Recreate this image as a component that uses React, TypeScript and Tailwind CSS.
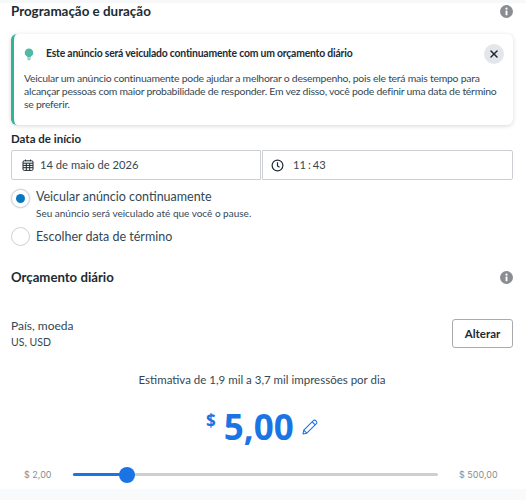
import React from 'react';
import { X } from 'lucide-react';

const InfoDot = () => (
  <svg viewBox="0 0 14 14" className="w-[13px] h-[13px]">
    <circle cx="7" cy="7" r="7" fill="#8a8d91" />
    <circle cx="7" cy="4" r="1.2" fill="#fff" />
    <rect x="6" y="6" width="2" height="5" rx="0.6" fill="#fff" />
  </svg>
);

const CalendarIcon = () => (
  <svg viewBox="0 0 12 12" className="w-[12px] h-[12px] text-[#1c2b33]" fill="none" stroke="currentColor" strokeWidth="1">
    <rect x="1" y="1.8" width="10" height="9.6" rx="1.2" />
    <path d="M1 4.2h10M1 6.4h10M1 8.7h10M4.3 4.2v7.2M7.7 4.2v7.2M3.5 0.6v1.6M8.5 0.6v1.6" />
  </svg>
);

const ClockIcon = () => (
  <svg viewBox="0 0 14 14" className="w-[13px] h-[13px] text-[#1c2b33]" fill="none" stroke="currentColor" strokeWidth="1.3">
    <circle cx="7" cy="7" r="5.8" />
    <path d="M7 3.6V7.4l2.2 1.6" />
  </svg>
);

const BulbIcon = () => (
  <svg viewBox="0 0 10 14" className="w-[10px] h-[13px]">
    <path d="M5 0.5a4.5 4.5 0 0 0-2.6 8.2c.5.4.7.9.7 1.4h3.8c0-.5.2-1 .7-1.4A4.5 4.5 0 0 0 5 0.5z" fill="#4fb9a5" />
    <rect x="3.2" y="10.8" width="3.6" height="2.4" rx="0.8" fill="#8fd3c6" />
  </svg>
);

const PencilIcon = () => (
  <svg viewBox="0 0 16 16" className="w-[16px] h-[16px] text-[#1b74e4]" fill="none" stroke="currentColor" strokeWidth="1.1">
    <path d="M1 15l.8-3.8L11.4 1.6a1.6 1.6 0 0 1 2.3 0l.7.7a1.6 1.6 0 0 1 0 2.3L4.8 14.2 1 15z" strokeLinejoin="round" />
    <path d="M1.8 11.2l3 3M10.2 2.8l3 3" />
  </svg>
);

export default function App() {
  return (
    <div className="font-['Lato',sans-serif] relative w-[526px] h-[500px] overflow-hidden bg-white text-[#1c2b33]">
      <div className="h-[3px] bg-[#f7f8f9]" />
      <div className="px-[11px] pr-[13px]">
        <div className="flex items-center justify-between h-[16px]">
          <h2 className="text-[13.4px] font-bold leading-[16px]">Programação e duração</h2>
          <InfoDot />
        </div>

        <div className="mt-[15px] h-[91px] rounded-[6px] border-l-[3px] border-[#2fb39a] bg-white shadow-[0_1px_4px_rgba(0,0,0,0.16)] pl-[10px] pr-[9px]">
          <div className="flex items-center h-[38px] pt-[2px]">
            <BulbIcon />
            <span className="ml-[12px] text-[10.4px] tracking-[-0.2px] font-bold">Este anúncio será veiculado continuamente com um orçamento diário</span>
            <span className="ml-auto w-[20px] h-[20px] rounded-full bg-[#e4e6eb] flex items-center justify-center">
              <X size={12} strokeWidth={3} />
            </span>
          </div>
          <p className="text-[10.4px] tracking-[-0.23px] leading-[13px] text-[#344854]">
            Veicular um anúncio continuamente pode ajudar a melhorar o desempenho, pois ele terá mais tempo para alcançar pessoas com maior probabilidade de responder. Em vez disso, você pode definir uma data de término se preferir.
          </p>
        </div>

        <div className="mt-[7px] text-[11.5px] font-bold leading-[14px]">Data de início</div>
        <div className="mt-[4px] flex gap-[1px] h-[30px]">
          <div className="w-[250px] border border-[#ccd0d5] rounded-l-[2px] flex items-center pl-[10px] gap-[6px] text-[11.2px] text-[#344854]">
            <CalendarIcon />
            <span>14 de maio de 2026</span>
          </div>
          <div className="flex-1 border border-[#ccd0d5] rounded-r-[2px] flex items-center pl-[8px] gap-[9px] text-[11.2px] text-[#344854]">
            <ClockIcon />
            <span>11<span className="mx-[2px]">:</span>43</span>
          </div>
        </div>

        <div className="mt-[8px] flex items-start gap-[6px]">
          <span className="w-[19px] h-[19px] mt-[1px] rounded-full border border-[#ccd0d5] flex items-center justify-center shadow-[0_0_2px_rgba(0,0,0,0.2)]">
            <span className="w-[9px] h-[9px] rounded-full bg-[#0a78be]" />
          </span>
          <div className="pt-[1px]">
            <div className="text-[12.5px] leading-[16px] text-[#344854]">Veicular anúncio continuamente</div>
            <div className="text-[10px] leading-[13px] mt-[2px] text-[#344854]">Seu anúncio será veiculado até que você o pause.</div>
          </div>
        </div>
        <div className="mt-[7px] flex items-center gap-[6px]">
          <span className="w-[19px] h-[19px] rounded-full border border-[#ccd0d5]" />
          <span className="text-[12.5px] leading-[16px] text-[#344854]">Escolher data de término</span>
        </div>

        <div className="mt-[23px] flex items-center justify-between h-[16px]">
          <h2 className="text-[13.2px] font-bold leading-[16px]">Orçamento diário</h2>
          <InfoDot />
        </div>

        <div className="mt-[33px] flex items-center justify-between">
          <div>
            <div className="text-[12px] leading-[15px] text-[#344854]">País, moeda</div>
            <div className="text-[10.5px] leading-[14px] mt-[2px] text-[#344854]">US, USD</div>
          </div>
          <button className="w-[61px] h-[29px] rounded-[3px] border border-[#a8abaf] text-[11.5px] font-bold">Alterar</button>
        </div>

        <div className="mt-[24px] text-center text-[11.5px] leading-[14px] text-[#344854]">Estimativa de 1,9 mil a 3,7 mil impressões por dia</div>

        <div className="mt-[19px] flex justify-center items-center text-[#1b74e4] font-bold font-['Noto_Sans',sans-serif]">
          <span className="text-[17px] leading-[16px] mb-[12px] mr-[8px]">$</span>
          <span className="text-[35px] leading-[42px]">5,00</span>
          <span className="ml-[8px]"><PencilIcon /></span>
        </div>

        <div className="mt-[20px] flex items-center font-['Inter',sans-serif]">
          <span className="ml-[13px] w-[44px] text-[9px] text-[#8a8d91]">$ 2,00</span>
          <div className="relative w-[365px] ml-[5px] h-[3px] bg-[#cfcfcf] rounded-full">
            <div className="h-full w-[54px] bg-[#1b74e4] rounded-l-full" />
            <div className="absolute left-[46px] -top-[6px] w-[16px] h-[16px] rounded-full bg-[#1b74e4]" />
          </div>
          <span className="ml-[21px] text-[9px] text-[#8a8d91]">$ 500,00</span>
        </div>
      </div>
      <div className="absolute left-0 right-0 bottom-0 h-[11px] bg-[#f9fafb]" />
    </div>
  );
}
